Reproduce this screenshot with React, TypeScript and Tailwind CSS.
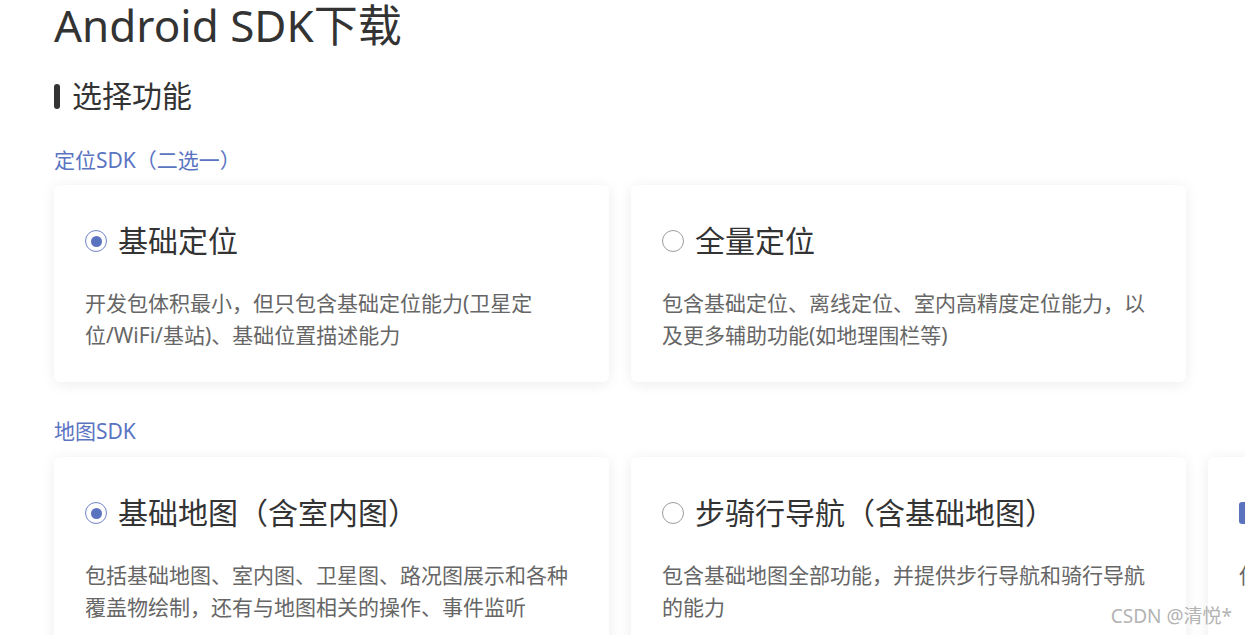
import React from "react";

type Opt = { title: string; desc: string; selected?: boolean; kind?: "radio" | "check" };

function Radio({ selected }: { selected?: boolean }) {
  return selected ? (
    <span className="flex h-[22px] w-[22px] shrink-0 items-center justify-center rounded-full border-[1.5px] border-[#7084c9] bg-white">
      <span className="h-[11px] w-[11px] rounded-full bg-[#5b72bf]" />
    </span>
  ) : (
    <span className="h-[22px] w-[22px] shrink-0 rounded-full border-[1.5px] border-[#9e9e9e] bg-white" />
  );
}

function Card({ opt }: { opt: Opt }) {
  return (
    <div className="w-[555px] shrink-0 rounded-[6px] bg-white px-[31px] pb-[31px] pt-[36px] shadow-[0_2px_14px_rgba(0,0,0,0.08)]">
      <div className="flex h-[40px] items-center gap-[11px]">
        {opt.kind === "check" ? (
          <span className="h-[22px] w-[22px] shrink-0 rounded-[3px] bg-[#5b72bf]" />
        ) : (
          <Radio selected={opt.selected} />
        )}
        <span className="whitespace-nowrap text-[30px] leading-[40px] text-[#333333]">{opt.title}</span>
      </div>
      <p className="mt-[26px] h-[64px] text-[21px] leading-[32px] text-[#666666]">{opt.desc}</p>
    </div>
  );
}

function SectionLabel({ children }: { children: React.ReactNode }) {
  return <div className="text-[21px] leading-[28px] text-[#5a74c2]">{children}</div>;
}

export default function App() {
  const row1: Opt[] = [
    {
      title: "基础定位",
      desc: "开发包体积最小，但只包含基础定位能力(卫星定位/WiFi/基站)、基础位置描述能力",
      selected: true,
    },
    {
      title: "全量定位",
      desc: "包含基础定位、离线定位、室内高精度定位能力，以及更多辅助功能(如地理围栏等)",
    },
  ];
  const row2: Opt[] = [
    {
      title: "基础地图（含室内图）",
      desc: "包括基础地图、室内图、卫星图、路况图展示和各种覆盖物绘制，还有与地图相关的操作、事件监听",
      selected: true,
    },
    {
      title: "步骑行导航（含基础地图）",
      desc: "包含基础地图全部功能，并提供步行导航和骑行导航的能力",
    },
    {
      title: "检索功能",
      desc: "使用检索功能获取各类地点信息",
      kind: "check",
    },
  ];

  return (
    <div className="relative h-[635px] w-[1245px] overflow-hidden bg-white font-['Noto_Sans','Noto_Sans_CJK_SC',sans-serif]">
      <div className="pl-[54px]">
        <h1 className="whitespace-nowrap text-[44px] leading-[50px] text-[#333333]">Android SDK下载</h1>

        <div className="mt-[26px] flex h-[40px] items-center gap-[12px]">
          <span className="h-[25px] w-[6px] rounded-full bg-[#333333]" />
          <h2 className="text-[30px] leading-[40px] text-[#333333]">选择功能</h2>
        </div>

        <div className="mt-[30px]">
          <SectionLabel>定位SDK（二选一）</SectionLabel>
        </div>
        <div className="mt-[11px] flex gap-[22px]">
          {row1.map((o) => (
            <Card key={o.title} opt={o} />
          ))}
        </div>

        <div className="mt-[35px]">
          <SectionLabel>地图SDK</SectionLabel>
        </div>
        <div className="mt-[12px] flex gap-[22px]">
          {row2.map((o) => (
            <Card key={o.title} opt={o} />
          ))}
        </div>
      </div>

      <div className="absolute bottom-[7px] right-[13px] whitespace-nowrap text-[19px] leading-[24px] text-[#b3b3b3]">
        CSDN @清悦*
      </div>
    </div>
  );
}
